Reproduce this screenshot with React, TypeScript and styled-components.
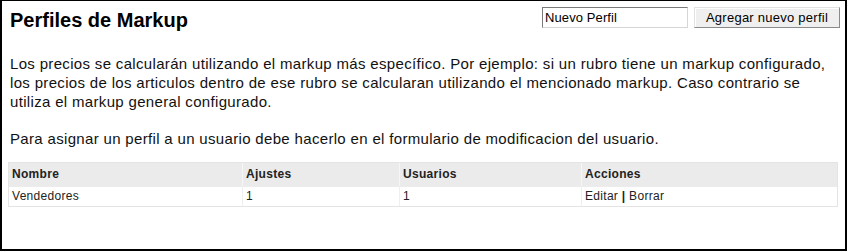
import React from "react";
import styled, { createGlobalStyle } from "styled-components";

const Global = createGlobalStyle`
  html, body { margin: 0; padding: 0; background: #fff; }
  body { font-family: "Liberation Sans", Arial, sans-serif; color: #000; }
  * { box-sizing: border-box; }
`;

const Frame = styled.div`
  width: 847px;
  height: 251px;
  border: 2px solid #000;
  border-top-width: 1px;
  padding: 6px 5px 0 6px;
  background: #fff;
  overflow: hidden;
`;

const Header = styled.div`
  display: flex;
  justify-content: space-between;
  align-items: flex-start;
`;

const Title = styled.h1`
  margin: 2px 0 0 2px;
  font-size: 20px;
  line-height: 23px;
  font-weight: bold;
  color: #000;
`;

const Form = styled.form`
  display: flex;
  gap: 6px;
  margin: 0;
`;

const TextInput = styled.input`
  width: 146px;
  height: 21px;
  margin: 0;
  padding: 0 2px;
  font-family: "Liberation Sans", Arial, sans-serif;
  font-size: 13px;
  letter-spacing: 0.1px;
  color: #000;
  background: #fff;
  border: 1px solid;
  border-color: #7a7a7a #d6d6d6 #d6d6d6 #7a7a7a;
  outline: none;
`;

const Button = styled.button`
  width: 146px;
  height: 21px;
  margin: 0;
  padding: 0;
  font-family: "Liberation Sans", Arial, sans-serif;
  font-size: 13px;
  letter-spacing: 0.25px;
  color: #000;
  background: #efefef;
  border: 1px solid;
  border-color: #e2e2e2 #8a8a8a #8a8a8a #e2e2e2;
  box-shadow: inset 1px 1px 0 #fff;
`;

const Para = styled.p<{ $top: number }>`
  margin: ${(p) => p.$top}px 0 0 2px;
  font-size: 15px;
  letter-spacing: 0.33px;
  line-height: 19px;
  white-space: nowrap;
  color: #111;
`;

const Table = styled.table`
  margin-top: 14px;
  width: 830px;
  border-collapse: separate;
  border-spacing: 0;
  border: 1px solid #e4e4e4;
  table-layout: fixed;
  font-size: 12px;
  letter-spacing: 0.3px;
`;

const Th = styled.th<{ $first?: boolean }>`
  height: 23px;
  padding: 0 3px;
  text-align: left;
  font-weight: bold;
  line-height: 23px;
  color: #222;
  background: #ebebeb;
  border-left: ${(p) => (p.$first ? "none" : "1px solid #f6f6f6")};
`;

const Td = styled.td<{ $first?: boolean }>`
  height: 20px;
  padding: 0 3px;
  line-height: 19px;
  color: #222;
  background: #fff;
  border-top: 1px solid #ececec;
  border-left: ${(p) => (p.$first ? "none" : "1px solid #efefef")};
`;

const Sep = styled.span`
  font-weight: bold;
`;

export default function App() {
  return (
    <>
      <Global />
      <Frame>
        <Header>
          <Title>Perfiles de Markup</Title>
          <Form onSubmit={(e) => e.preventDefault()}>
            <TextInput defaultValue="Nuevo Perfil" />
            <Button type="button">Agregar nuevo perfil</Button>
          </Form>
        </Header>
        <Para $top={22}>
          Los precios se calcularán utilizando el markup más específico. Por ejemplo: si un rubro tiene un markup
          configurado,
          <br />
          los precios de los articulos dentro de ese rubro se calcularan utilizando el mencionado markup. Caso
          contrario se
          <br />
          utiliza el markup general configurado.
        </Para>
        <Para $top={18}>
          Para asignar un perfil a un usuario debe hacerlo en el formulario de modificacion del usuario.
        </Para>
        <Table>
          <colgroup>
            <col style={{ width: 233 }} />
            <col style={{ width: 157 }} />
            <col style={{ width: 182 }} />
            <col />
          </colgroup>
          <thead>
            <tr>
              <Th $first>Nombre</Th>
              <Th>Ajustes</Th>
              <Th>Usuarios</Th>
              <Th>Acciones</Th>
            </tr>
          </thead>
          <tbody>
            <tr>
              <Td $first>Vendedores</Td>
              <Td>1</Td>
              <Td>1</Td>
              <Td>
                Editar <Sep>|</Sep> Borrar
              </Td>
            </tr>
          </tbody>
        </Table>
      </Frame>
    </>
  );
}
